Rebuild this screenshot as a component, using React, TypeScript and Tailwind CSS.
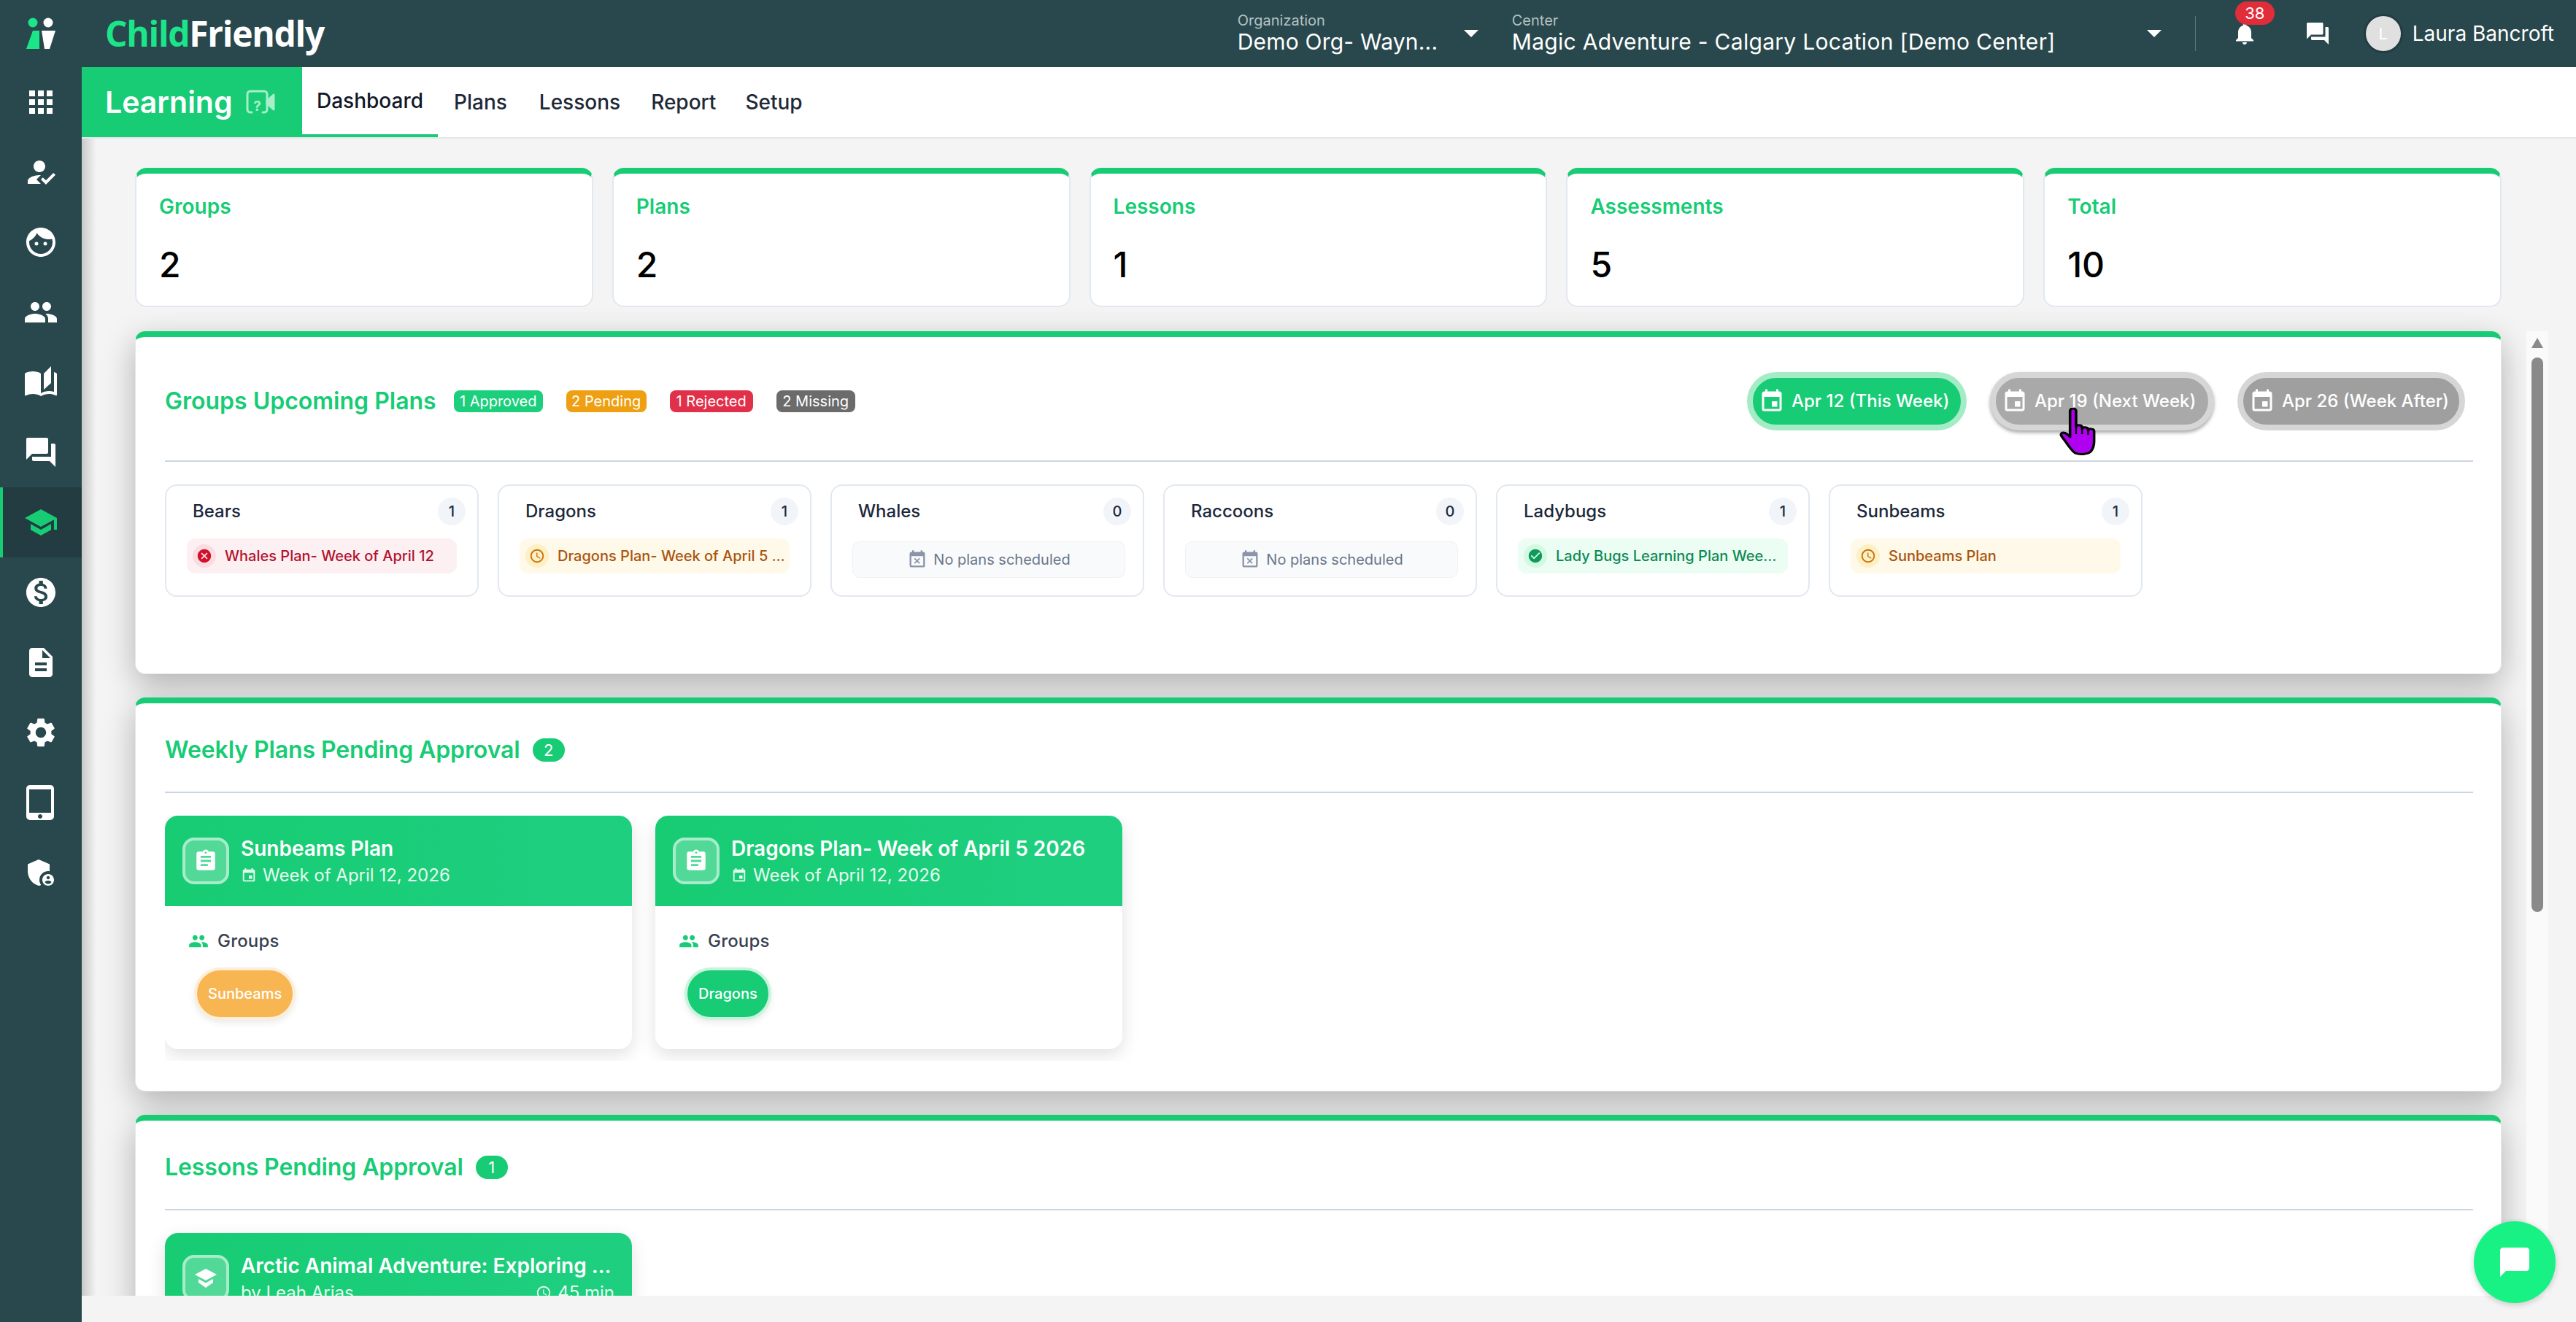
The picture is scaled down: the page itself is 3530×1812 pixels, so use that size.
import React from "react";
import {
  MdApps, MdHowToReg, MdFace, MdPeople, MdAutoStories, MdForum, MdSchool, MdMonetizationOn,
  MdDescription, MdSettings, MdTabletMac, MdAdminPanelSettings, MdArrowDropDown, MdNotifications,
  MdEvent, MdCancel, MdCheckCircle, MdAccessTime, MdEventBusy, MdAssignment, MdChatBubble,
} from "react-icons/md";

const font = { fontFamily: '"Inter","Liberation Sans",sans-serif' };

function LogoMark() {
  return (
    <svg width="42" height="44" viewBox="0 0 42 44">
      <circle cx="10" cy="7" r="6.5" fill="#1ce589" />
      <circle cx="31" cy="7" r="6.5" fill="#fff" />
      <polygon points="10,18 19,18 19,43 1,43" fill="#1ce589" />
      <polygon points="22,18 41,18 33,43 26,43" fill="#fff" />
    </svg>
  );
}

function LearningIcon() {
  return (
    <svg width="42" height="34" viewBox="0 0 42 34" fill="none" stroke="#a6efc9" strokeWidth="3">
      <path d="M9 31H7a4 4 0 0 1-4-4V6a4 4 0 0 1 4-4h19a4 4 0 0 1 4 4v21a4 4 0 0 1-4 4h-2" strokeLinecap="round" />
      <path d="M30 15l9-8v20l-9-8z" strokeLinejoin="round" fill="#a6efc9" />
      <text x="16.5" y="29" fontSize="19" fontWeight="700" fill="#a6efc9" stroke="none" textAnchor="middle" fontFamily="Inter">?</text>
    </svg>
  );
}

function HandCursor() {
  return (
    <svg width="53" height="66" viewBox="5 0 45 66" preserveAspectRatio="none" className="absolute left-[2819px] top-[559px] z-20">
      <path
        d="M20 4c0-4 7-4 7 0v22c0-3 6-3 7 0v3c0-3 6-3 7 0v2c0-3 7-3 7 1v14c0 7-1 10-4 14-2 3-12 5-18 2-4-3-8-10-12-17-2-4-6-7-4-10 2-2 6-1 10 5z"
        fill="#b000f0" stroke="#000" strokeWidth="3" strokeLinejoin="round"
      />
      <path d="M27 24v12M34 28v8M41 30v7" stroke="#000" strokeWidth="2" fill="none" />
    </svg>
  );
}

function LessonIcon() {
  return (
    <svg width="30" height="26" viewBox="0 0 30 26" fill="#fff">
      <polygon points="15,0 30,8 15,16 0,8" />
      <polygon points="5,14 15,19.5 25,14 25,19 15,26 5,19" />
    </svg>
  );
}

const navIcons = [
  MdApps, MdHowToReg, MdFace, MdPeople, MdAutoStories, MdForum, MdSchool,
  MdMonetizationOn, MdDescription, MdSettings, MdTabletMac, MdAdminPanelSettings,
];

function Sidebar() {
  return (
    <aside className="w-[112px] shrink-0 bg-[#29484d] flex flex-col">
      <div className="h-[92px] flex items-center justify-center"><LogoMark /></div>
      {navIcons.map((Icon, i) => {
        const active = i === 6;
        return (
          <div
            key={i}
            className={
              active
                ? "h-[96px] flex items-center justify-center bg-[#223c41] border-l-4 border-[#17cc75] pr-1 text-[#17cc75]"
                : "h-[96px] flex items-center justify-center text-white"
            }
          >
            <Icon size={48} />
          </div>
        );
      })}
    </aside>
  );
}

function TopBar() {
  return (
    <header className="h-[92px] bg-[#29484d] flex items-center text-white relative">
      <div className="ml-[32px] text-[48px] font-bold leading-none tracking-[-1.3px]" style={{ fontFamily: '"Open Sans",sans-serif' }}>
        <span className="text-[#1ce589]">Child</span>
        <span>Friendly</span>
      </div>
      <div className="ml-auto flex items-center h-full">
        <div className="w-[272px] -mt-[3px] flex flex-col">
          <span className="text-[20px] leading-[24px] text-[#b4c1c3]">Organization</span>
          <span className="text-[30px] leading-[34px] whitespace-nowrap tracking-[0.2px]">Demo Org- Wayn...</span>
        </div>
        <MdArrowDropDown size={48} className="ml-[24px] mr-[32px] -mt-[2px]" />
        <div className="w-[741px] -mt-[3px] flex flex-col">
          <span className="text-[20px] leading-[24px] text-[#b4c1c3]">Center</span>
          <span className="text-[30px] leading-[34px] whitespace-nowrap tracking-[0.3px]">Magic Adventure - Calgary Location [Demo Center]</span>
        </div>
        <MdArrowDropDown size={48} className="ml-[115px] -mt-[2px]" />
        <div className="w-px h-[48px] bg-[#5f7679] ml-[32px]" />
        <div className="relative ml-[49px] w-[36px] flex justify-center">
          <MdNotifications size={36} />
          <span className="absolute left-[5px] top-[-26px] w-[54px] h-[32px] rounded-full bg-[#e12d39] text-[22px] leading-[32px] text-center">38</span>
        </div>
        <MdForum size={36} className="ml-[64px]" />
        <div className="ml-[48px] w-[48px] h-[48px] rounded-full bg-[#e0e0e0] ring-[3px] ring-[#223c41] flex items-center justify-center text-[22px] text-white">L</div>
        <span className="ml-[16px] mr-[30px] text-[28px] whitespace-nowrap">Laura Bancroft</span>
      </div>
    </header>
  );
}

function SubNav() {
  const tabs = [
    ["Dashboard", "w-[186px] justify-center border-b-4 border-[#17cc75] text-[#111827]"],
    ["Plans", "px-[22px] text-[#1f2937]"],
    ["Lessons", "px-[22px] text-[#1f2937]"],
    ["Report", "px-[20px] text-[#1f2937]"],
    ["Setup", "px-[20px] text-[#1f2937]"],
  ];
  return (
    <nav className="h-[98px] bg-white border-b-2 border-[#e5e7eb] flex items-start">
      <div className="h-[96px] w-[302px] bg-[#17cc75] flex items-center pl-[32px] gap-[17px] text-white">
        <span className="text-[41px] font-semibold leading-none">Learning</span>
        <LearningIcon />
      </div>
      {tabs.map(([t, c]) => (
        <div key={t} className={"h-[96px] flex items-center text-[28px] font-medium " + c}>
          {t}
        </div>
      ))}
    </nav>
  );
}

const stats = [
  ["Groups", "2"],
  ["Plans", "2"],
  ["Lessons", "1"],
  ["Assessments", "5"],
  ["Total", "10"],
];

function StatCards() {
  return (
    <div className="grid grid-cols-5 gap-[26px]">
      {stats.map(([label, v]) => (
        <div key={label} className="h-[191px] bg-white border-2 border-[#e2e8f0] border-t-8 border-t-[#17cc75] rounded-[16px] pl-[31px] flex flex-col">
          <span className="mt-[28px] text-[28px] leading-[34px] font-semibold text-[#17cc75]">{label}</span>
          <span className="mt-[34px] text-[48px] leading-[58px] font-medium text-black">{v}</span>
        </div>
      ))}
    </div>
  );
}

function Panel({ children, cls }: { children: React.ReactNode; cls: string }) {
  return (
    <section className={"bg-white border border-[#e2e8f0] border-t-8 border-t-[#17cc75] rounded-[14px] shadow-[0_14px_44px_rgba(0,0,0,0.28)] pl-[40px] pr-[38px] pt-[48px] " + cls}>
      {children}
    </section>
  );
}

const DateBtn = ({ label, w, kind }: { label: string; w: string; kind: "on" | "hover" | "off" }) => (
  <div
    className={
      w + " h-[80px] rounded-full border-8 flex items-center pl-[8px] gap-[9px] text-white text-[24px] font-medium whitespace-nowrap " +
      (kind === "on"
        ? "bg-[#17cc75] border-[#a5ecc6]"
        : kind === "hover"
        ? "bg-[#a9a9a9] border-[#d6d6d6] shadow-[0_3px_5px_rgba(0,0,0,0.35)]"
        : "bg-[#9f9f9f] border-[#d6d6d6]")
    }
  >
    <MdEvent size={36} className="shrink-0" />
    <span>{label}</span>
  </div>
);

const badges = [
  ["1 Approved", "bg-[#1ccf7d] w-[122px]"],
  ["2 Pending", "bg-[#ee9f12] w-[110px]"],
  ["1 Rejected", "bg-[#e1304a] w-[114px]"],
  ["2 Missing", "bg-[#6b6b6b] w-[108px]"],
];

type Item = { name: string; count: number; kind: "red" | "amber" | "green" | "none"; text?: string };
const groups: Item[] = [
  { name: "Bears", count: 1, kind: "red", text: "Whales Plan- Week of April 12" },
  { name: "Dragons", count: 1, kind: "amber", text: "Dragons Plan- Week of April 5 2026" },
  { name: "Whales", count: 0, kind: "none" },
  { name: "Raccoons", count: 0, kind: "none" },
  { name: "Ladybugs", count: 1, kind: "green", text: "Lady Bugs Learning Plan Week of April 12" },
  { name: "Sunbeams", count: 1, kind: "amber", text: "Sunbeams Plan" },
];

function GroupCard({ g }: { g: Item }) {
  const tone =
    g.kind === "red"
      ? { box: "pr-[4px] bg-[#fdf0f2] text-[#b3132f]", circle: "bg-[#fadde2]", Icon: MdCancel, iconCls: "text-[#d0112b]" }
      : g.kind === "amber"
      ? { box: "pr-[4px] bg-[#fef9e9] text-[#aa5510]", circle: "bg-[#fdf0c4]", Icon: MdAccessTime, iconCls: "text-[#c8700f]" }
      : { box: "pr-[9px] bg-[#ecfdf3] text-[#0f8a55]", circle: "bg-[#d3f9e2]", Icon: MdCheckCircle, iconCls: "text-[#0f9a5c]" };
  const { Icon } = tone;
  return (
    <div className="w-[430px] h-[154px] border-2 border-[#e2e8f0] rounded-[16px] pl-[28px] pr-[16px] pt-[16px] relative">
      <div className="flex items-center justify-between h-[38px] pl-[8px]">
        <span className="text-[24px] font-medium text-[#1e293b]">{g.name}</span>
        <span className="w-[38px] h-[38px] rounded-full bg-[#f1f5f9] flex items-center justify-center text-[20px] font-medium text-[#1e293b]">{g.count}</span>
      </div>
      {g.kind === "none" ? (
        <div className="mt-[22px] ml-[0px] mr-[8px] h-[50px] rounded-[10px] bg-[#f8fafc] border border-[#eef1f6] flex items-center justify-center gap-[8px] text-[20px] text-[#6b7688]">
          <MdEventBusy size={28} className="text-[#8b95a7]" />
          <span>No plans scheduled</span>
        </div>
      ) : (
        <div className={"mt-[18px] mr-[12px] h-[48px] rounded-[12px] flex items-center pl-[8px] gap-[12px] text-[20px] font-medium " + tone.box}>
          <span className={"w-[32px] h-[32px] shrink-0 rounded-full flex items-center justify-center " + tone.circle}>
            <Icon size={22} className={tone.iconCls} />
          </span>
          <span className="truncate">{g.text}</span>
        </div>
      )}
    </div>
  );
}

function GroupsPanel() {
  return (
    <Panel cls="h-[470px]">
      <div className="flex items-center justify-between h-[80px]">
        <div className="flex items-center">
          <span className="text-[32px] font-semibold text-[#17cc75] whitespace-nowrap">Groups Upcoming Plans</span>
          <div className="flex gap-[32px] ml-[24px]">
            {badges.map(([t, c]) => (
              <span key={t} className={c + " h-[30px] rounded-[8px] text-white text-[20px] leading-[30px] text-center whitespace-nowrap"}>{t}</span>
            ))}
          </div>
        </div>
        <div className="flex gap-[32px] mr-[11px]">
          <DateBtn label="Apr 12 (This Week)" w="w-[301px]" kind="on" />
          <DateBtn label="Apr 19 (Next Week)" w="w-[307px]" kind="hover" />
          <DateBtn label="Apr 26 (Week After)" w="w-[312px]" kind="off" />
        </div>
      </div>
      <div className="mt-[41px] border-t-2 border-[#cbd5e1]" />
      <div className="mt-[31px] flex gap-[26px]">
        {groups.map((g) => <GroupCard key={g.name} g={g} />)}
      </div>
    </Panel>
  );
}

function SectionTitle({ title, n }: { title: string; n: number }) {
  return (
    <>
      <div className="flex items-center h-[32px] gap-[17px]">
        <span className="text-[32px] font-semibold tracking-[-0.1px] text-[#17cc75] whitespace-nowrap">{title}</span>
        <span className="w-[44px] h-[32px] rounded-full bg-[#17cc75] text-white text-[22px] text-center leading-[32px]">{n}</span>
      </div>
      <div className="mt-[41px] border-t-2 border-[#cbd5e1]" />
    </>
  );
}

function PlanCard({ title, chip, chipCls }: { title: string; chip: string; chipCls: string }) {
  return (
    <div className="w-[640px] h-[320px] bg-white rounded-[18px] shadow-[0_8px_24px_rgba(0,0,0,0.12)]">
      <div className="h-[124px] rounded-t-[18px] bg-gradient-to-r from-[#17cc73] to-[#1ecf80] pl-[24px] flex items-center gap-[16px] text-white">
        <div className="w-[64px] h-[64px] rounded-[16px] bg-white/25 border-4 border-white/50 flex items-center justify-center">
          <MdAssignment size={34} />
        </div>
        <div className="flex flex-col">
          <span className="text-[28px] leading-[36px] font-semibold whitespace-nowrap">{title}</span>
          <span className="mt-[4px] flex items-center gap-[8px] text-[24px] leading-[30px] text-[#e6fbf0]">
            <MdEvent size={22} />Week of April 12, 2026
          </span>
        </div>
      </div>
      <div className="pl-[32px] pt-[32px]">
        <div className="flex items-center gap-[12px] text-[24px] font-medium tracking-[0.2px] text-[#374151] h-[32px]">
          <MdPeople size={28} className="text-[#17cc75]" />Groups
        </div>
      </div>
      <div className="pl-[40px] pt-[24px]">
        <span className={"inline-flex h-[72px] -mt-[4px] items-center px-[15px] rounded-full border-4 text-white text-[20px] font-medium shadow-[0_4px_8px_rgba(0,0,0,0.08)] " + chipCls}>{chip}</span>
      </div>
    </div>
  );
}

function WeeklyPanel() {
  return (
    <Panel cls="h-[540px]">
      <SectionTitle title="Weekly Plans Pending Approval" n={2} />
      <div className="mt-[31px] flex gap-[32px] overflow-hidden pb-[16px]">
        <PlanCard title="Sunbeams Plan" chip="Sunbeams" chipCls="bg-[#f8b653] border-[#fdeed8]" />
        <PlanCard title="Dragons Plan- Week of April 5 2026" chip="Dragons" chipCls="bg-[#17cc75] border-[#c8f4dd]" />
      </div>
    </Panel>
  );
}

function LessonsPanel() {
  return (
    <Panel cls="h-[400px] shrink-0">
      <SectionTitle title="Lessons Pending Approval" n={1} />
      <div className="mt-[31px] w-[640px] h-[124px] rounded-t-[18px] bg-gradient-to-r from-[#17cc73] to-[#1ecf80] pl-[24px] pr-[24px] flex items-center gap-[16px] text-white shadow-[0_8px_24px_rgba(0,0,0,0.12)]">
        <div className="w-[64px] h-[64px] shrink-0 rounded-[16px] bg-white/25 border-4 border-white/50 flex items-center justify-center">
          <LessonIcon />
        </div>
        <div className="flex flex-col flex-1 min-w-0">
          <span className="text-[28px] leading-[36px] font-semibold truncate">Arctic Animal Adventure: Exploring Polar Habitats</span>
          <div className="mt-[4px] flex items-center justify-between text-[24px] leading-[30px] text-[#e6fbf0]">
            <span>by Leah Arias</span>
            <span className="flex items-center gap-[8px]"><MdAccessTime size={22} />45 min</span>
          </div>
        </div>
      </div>
    </Panel>
  );
}

function Scrollbar() {
  return (
    <div className="w-[30px] shrink-0 mt-[264px] bg-[#fafafa] flex flex-col items-center pt-[9px]">
      <div className="w-0 h-0 border-l-[8px] border-r-[8px] border-b-[14px] border-l-transparent border-r-transparent border-b-[#8a8a8a]" />
      <div className="mt-[13px] w-[16px] h-[760px] rounded-full bg-[#8a8a8a]" />
    </div>
  );
}

export default function App() {
  return (
    <div className="relative w-[3530px] h-[1812px] flex overflow-hidden bg-[#f4f4f4]" style={font}>
      <Sidebar />
      <div className="flex-1 min-w-0 flex flex-col">
        <TopBar />
        <SubNav />
        <div className="flex h-[1586px] overflow-hidden">
          <div className="w-[20px] shrink-0 bg-gradient-to-r from-[#c9c9c9] to-[#f4f4f4]" />
          <main className="flex-1 min-w-0 pl-[53px] pr-[34px] pt-[40px] flex flex-col gap-[32px] overflow-hidden">
            <StatCards />
            <div className="mt-[1px] flex flex-col gap-[32px]">
              <GroupsPanel />
              <WeeklyPanel />
              <LessonsPanel />
            </div>
          </main>
          <Scrollbar />
          <div className="w-[38px] shrink-0" />
        </div>
      </div>
      <HandCursor />
      <button className="absolute left-[3390px] top-[1674px] w-[112px] h-[112px] rounded-full bg-[#18f285] shadow-[0_2px_8px_rgba(0,0,0,0.2)] flex items-center justify-center text-white z-10">
        <MdChatBubble size={48} />
      </button>
    </div>
  );
}
